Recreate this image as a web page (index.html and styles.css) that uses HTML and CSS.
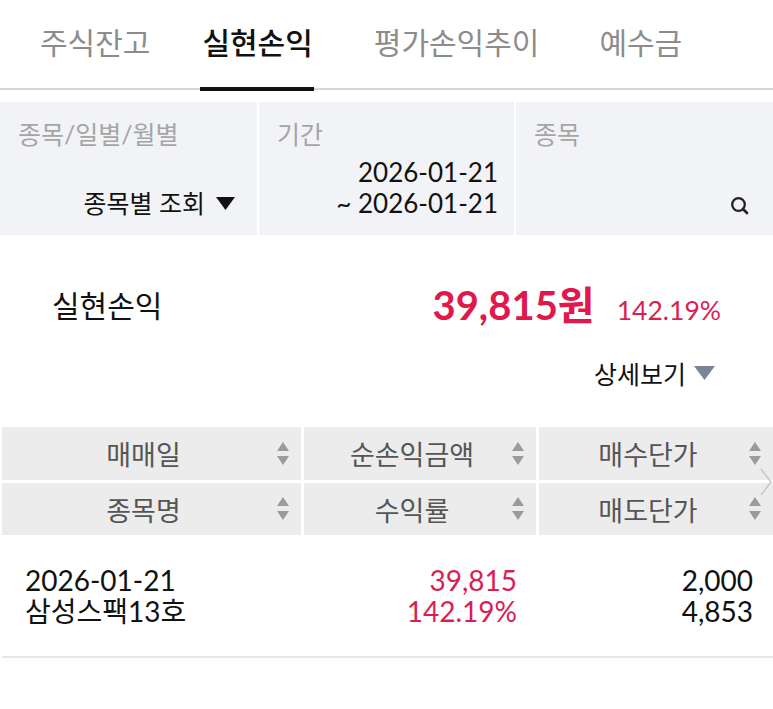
FILE: index.html
```html
<!DOCTYPE html>
<html lang="ko">
<head>
<meta charset="utf-8">
<title>실현손익</title>
<link rel="stylesheet" href="styles.css">
</head>
<body>
<div class="page">
  <nav class="tabs">
    <div class="tab">주식잔고</div>
    <div class="tab active">실현손익</div>
    <div class="tab">평가손익추이</div>
    <div class="tab">예수금</div>
  </nav>

  <section class="filters">
    <div class="filter">
      <div class="flabel">종목/일별/월별</div>
      <div class="fvalue">
        <span>종목별 조회</span>
        <svg class="caret" width="19" height="13" viewBox="0 0 19 13"><polygon points="0,0 19,0 9.5,13" fill="#111"/></svg>
      </div>
    </div>
    <div class="filter">
      <div class="flabel">기간</div>
      <div class="fvalue dates">
        <div>2026-01-21</div>
        <div>~ 2026-01-21</div>
      </div>
    </div>
    <div class="filter">
      <div class="flabel">종목</div>
      <div class="fvalue">
        <svg class="search" width="22" height="22" viewBox="0 0 22 22"><circle cx="9.5" cy="9.5" r="6.3" fill="none" stroke="#222" stroke-width="2.3"/><line x1="14" y1="14" x2="18" y2="18" stroke="#222" stroke-width="2.6" stroke-linecap="round"/></svg>
      </div>
    </div>
  </section>

  <section class="summary">
    <div class="sum-title">실현손익</div>
    <div class="sum-values">
      <span class="sum-amount">39,815원</span>
      <span class="sum-rate">142.19%</span>
    </div>
  </section>

  <div class="detail">
    <span>상세보기</span>
    <svg width="21" height="14" viewBox="0 0 21 14"><polygon points="0,0 21,0 10.5,14" fill="#7c8597"/></svg>
  </div>

  <section class="table">
    <div class="thead">
      <div class="th"><span class="thtext">매매일</span><svg class="sort" width="12" height="24" viewBox="0 0 12 24"><polygon points="6,0 12,9 0,9" fill="#9b9b9b"/><polygon points="0,14 12,14 6,23" fill="#9b9b9b"/></svg></div>
      <div class="th"><span class="thtext">순손익금액</span><svg class="sort" width="12" height="24" viewBox="0 0 12 24"><polygon points="6,0 12,9 0,9" fill="#9b9b9b"/><polygon points="0,14 12,14 6,23" fill="#9b9b9b"/></svg></div>
      <div class="th"><span class="thtext">매수단가</span><svg class="sort" width="12" height="24" viewBox="0 0 12 24"><polygon points="6,0 12,9 0,9" fill="#9b9b9b"/><polygon points="0,14 12,14 6,23" fill="#9b9b9b"/></svg></div>
      <div class="th"><span class="thtext">종목명</span><svg class="sort" width="12" height="24" viewBox="0 0 12 24"><polygon points="6,0 12,9 0,9" fill="#9b9b9b"/><polygon points="0,14 12,14 6,23" fill="#9b9b9b"/></svg></div>
      <div class="th"><span class="thtext">수익률</span><svg class="sort" width="12" height="24" viewBox="0 0 12 24"><polygon points="6,0 12,9 0,9" fill="#9b9b9b"/><polygon points="0,14 12,14 6,23" fill="#9b9b9b"/></svg></div>
      <div class="th"><span class="thtext">매도단가</span><svg class="sort" width="12" height="24" viewBox="0 0 12 24"><polygon points="6,0 12,9 0,9" fill="#9b9b9b"/><polygon points="0,14 12,14 6,23" fill="#9b9b9b"/></svg></div>
      <svg class="more" width="12" height="28" viewBox="0 0 12 28"><polyline points="1,1 11,14 1,27" fill="none" stroke="#c9c9c9" stroke-width="1.6"/></svg>
    </div>
    <div class="tbody">
      <div class="td left">
        <div>2026-01-21</div>
        <div>삼성스팩13호</div>
      </div>
      <div class="td right red">
        <div>39,815</div>
        <div>142.19%</div>
      </div>
      <div class="td right">
        <div>2,000</div>
        <div>4,853</div>
      </div>
    </div>
  </section>
</div>
</body>
</html>
```

FILE: styles.css
```css
* { box-sizing: border-box; }
html, body { margin: 0; padding: 0; background: #fff; }
body {
  font-family: "Lato", "Noto Sans CJK KR", sans-serif;
  color: #111;
  width: 773px;
}
.page { width: 773px; }

/* Tabs */
.tabs {
  display: flex;
  gap: 60px;
  padding-left: 40px;
  height: 90px;
  border-bottom: 2px solid #d6d6d6;
}
.tab {
  font-size: 30px;
  line-height: 32px;
  padding-top: 26px;
  color: #8c8c8c;
}
.tab.active {
  color: #111;
  font-weight: 500;
  padding-left: 2px;
  padding-right: 1px;
  margin-left: -10px;
  border-bottom: 4px solid #111;
  margin-bottom: -3px;
}

/* Filters */
.filters {
  margin-top: 12px;
  height: 133px;
  display: grid;
  grid-template-columns: 257px 255px 1fr;
  column-gap: 2px;
}
.filter {
  background: #f2f3f6;
  display: flex;
  flex-direction: column;
  padding: 14px 20px 16px 18px;
}
.flabel {
  font-size: 25px;
  line-height: 36px;
  color: #a5a5a5;
}
.fvalue {
  margin-top: auto;
  display: flex;
  justify-content: flex-end;
  align-items: center;
  gap: 11px;
  font-size: 25px;
  line-height: 31px;
  color: #111;
}
.fvalue.dates {
  flex-direction: column;
  align-items: flex-end;
  gap: 0;
  font-size: 26px;
}
.filter:first-child .fvalue { padding-right: 2px; }
.filter:nth-child(2) { padding-right: 16px; }
.search { margin-right: 2px; margin-bottom: 2px; }

/* Summary */
.summary {
  margin-top: 50px;
  padding: 0 52px;
  height: 40px;
  display: flex;
  justify-content: space-between;
  align-items: center;
}
.sum-title { font-size: 30px; line-height: 40px; }
.sum-values { display: flex; align-items: baseline; gap: 22px; }
.sum-amount {
  font-size: 40px;
  line-height: 40px;
  font-weight: 700;
  color: #e1184c;
}
.sum-rate {
  font-size: 26.5px;
  color: #d91e53;
}

.detail {
  margin-top: 30px;
  height: 36px;
  display: flex;
  justify-content: flex-end;
  align-items: center;
  gap: 8px;
  padding-right: 58px;
  font-size: 25px;
  color: #111;
}

/* Table */
.table { margin-top: 36px; padding-left: 2px; }
.thead {
  position: relative;
  display: grid;
  grid-template-columns: 299px 232px 1fr;
  grid-template-rows: 53px 52px;
  gap: 3px;
}
.th {
  background: #ececec;
  display: grid;
  grid-template-columns: 20px 1fr 36px;
  align-items: center;
}
.thtext {
  grid-column: 2;
  text-align: center;
  font-size: 27px;
  color: #555;
}
.sort {
  grid-column: 3;
  justify-self: center;
}
.more { position: absolute; right: 1px; top: 41px; }

.tbody {
  display: grid;
  grid-template-columns: 299px 232px 1fr;
  column-gap: 3px;
  padding: 30px 0 29px;
  border-bottom: 2px solid #e6e6e6;
}
.td {
  font-size: 28px;
  line-height: 31px;
}
.td.left { padding-left: 23px; }
.td.right { text-align: right; padding-right: 19px; }
.td.red { color: #d91e53; }
.td:last-child { padding-right: 20px; }
```
